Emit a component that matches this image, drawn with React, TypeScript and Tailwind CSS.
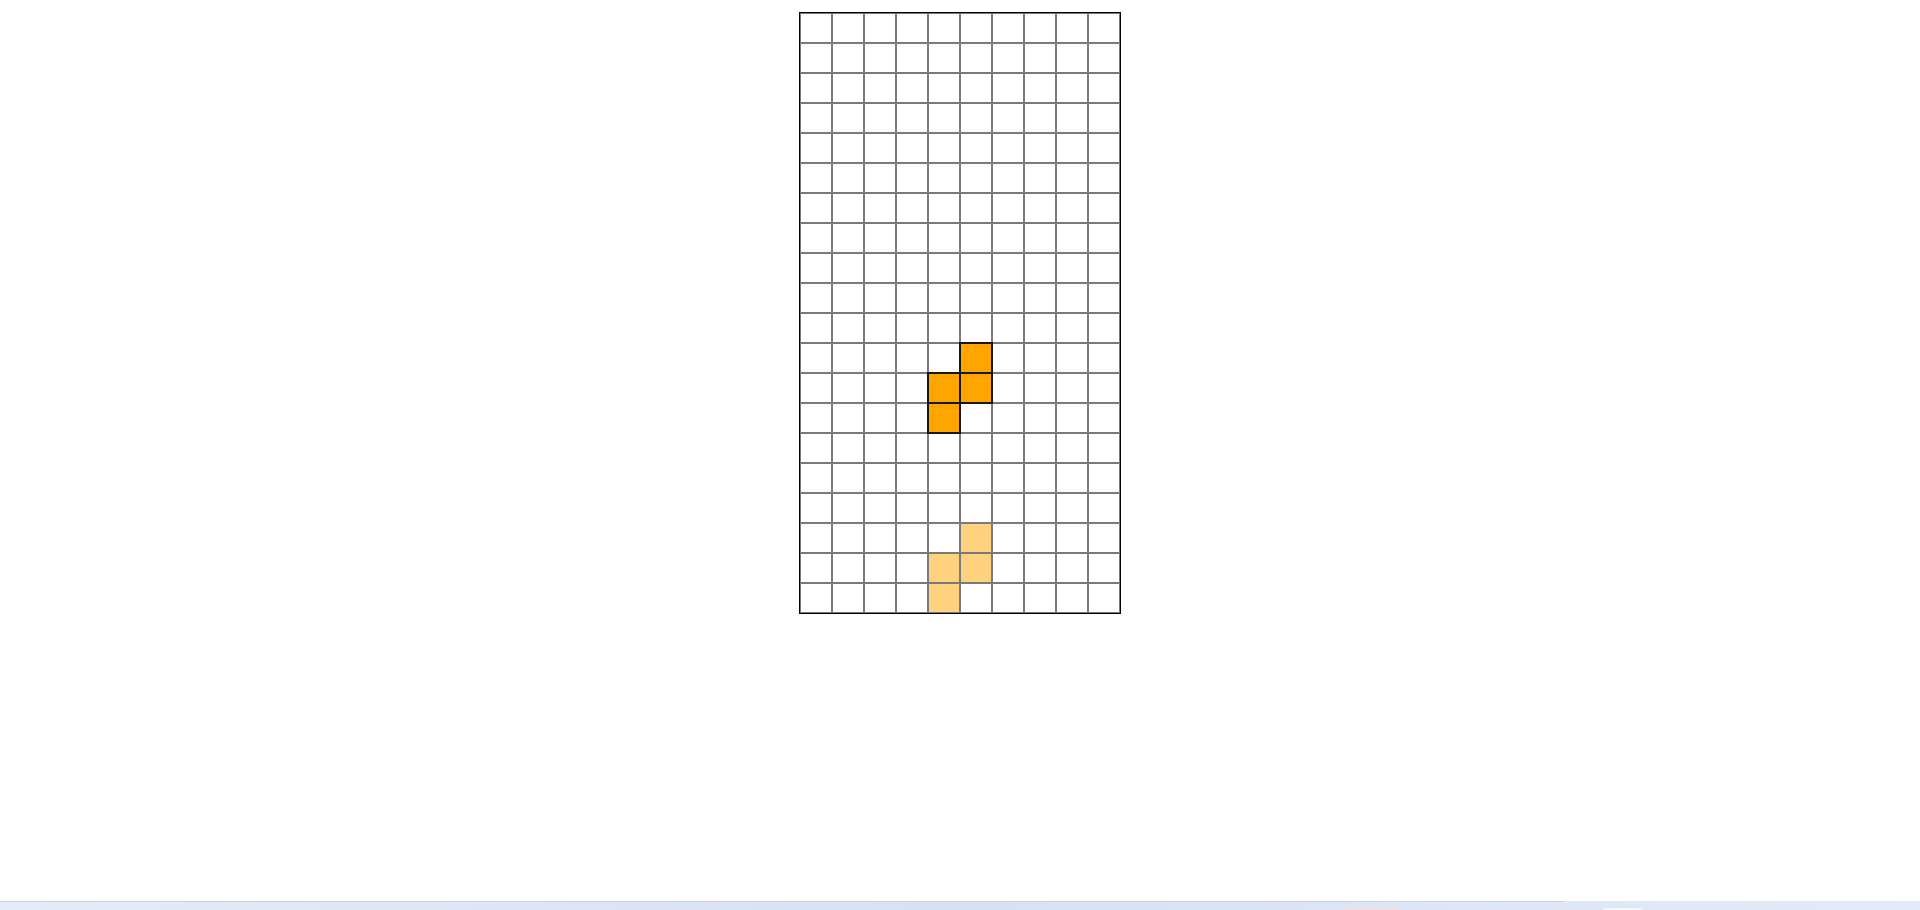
import React from "react";

const COLS = 10;
const ROWS = 20;

// active piece (S shape, vertical) and its ghost below
const active: [number, number][] = [
  [5, 11],
  [5, 12],
  [4, 12],
  [4, 13]
];
const ghost: [number, number][] = [
  [5, 17],
  [5, 18],
  [4, 18],
  [4, 19]
];

const has = (list: [number, number][], x: number, y: number) =>
  list.some(([cx, cy]) => cx === x && cy === y);

const Board: React.FC = () => {
  const cells = [];
  for (let y = 0; y < ROWS; y++) {
    for (let x = 0; x < COLS; x++) {
      let cls = "bg-white";
      if (has(active, x, y)) {
        cls = "bg-[#ffa500] relative shadow-[0_0_0_2px_#161616]";
      } else if (has(ghost, x, y)) {
        cls = "bg-[#ffd280]";
      }
      cells.push(<div key={`${x}-${y}`} className={cls} />);
    }
  }

  return (
    <div className="border border-black">
      <div className="grid grid-cols-[repeat(10,30px)] grid-rows-[repeat(20,28px)] gap-[2px] p-px bg-[#7a7a7a] w-[320px] h-[600px]">
        {cells}
      </div>
    </div>
  );
};

const Taskbar: React.FC = () => (
  <div className="h-[9px] flex flex-col">
    <div className="flex h-px">
      <div className="w-[1564px] bg-[#c8d1e2]" />
      <div className="flex-1 bg-[#dbe7f5]" />
    </div>
    <div className="flex-1 bg-gradient-to-r from-[#e3ecf7] via-[#d6e1f6] to-[#e2ecf8] relative">
      <div className="absolute left-[1342px] top-[6px] w-[56px] h-[2px] bg-[#f6dede] rounded-t" />
      <div className="absolute left-[1603px] top-[6px] w-[40px] h-[2px] bg-[#f4f7fb] rounded-t" />
    </div>
  </div>
);

export default function App() {
  return (
    <div className="h-[910px] w-full bg-white flex flex-col">
      <div className="flex-1 flex justify-center pt-[12px]">
        <div>
          <Board />
        </div>
      </div>
      <Taskbar />
    </div>
  );
}
